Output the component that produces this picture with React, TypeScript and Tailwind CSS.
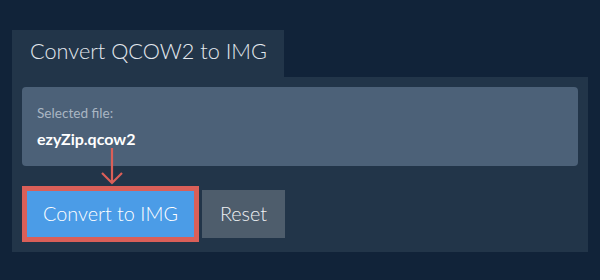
import React from 'react';

export default function App() {
  return (
    <div className="w-[600px] h-[280px] bg-[#112339] pt-[30px] px-[12px] font-['Lato','Open_Sans',sans-serif]">
      <div className="w-[272px] h-[47px] bg-[#223549] pl-[18px] pt-[7px] text-[21.7px] leading-[28px] font-light text-[#e3e8ee]">
        Convert QCOW2 to IMG
      </div>
      <div className="relative w-[576px] h-[175px] bg-[#223549] p-[10px]">
        <div className="h-[79px] rounded-[4px] bg-[#4c6178] px-[15px] pt-[17px]">
          <div className="text-[13.6px] leading-[18px] text-[#aab6c3]">Selected file:</div>
          <div className="mt-[7px] text-[16px] leading-[20px] font-bold text-white">ezyZip.qcow2</div>
        </div>
        <div className="mt-[20px] flex items-center">
          <div className="border-[5px] border-[#da5f58]">
            <button className="w-[167px] h-[46px] bg-[#4b9ce7] text-[19.8px] font-light text-white">Convert to IMG</button>
          </div>
          <button className="ml-[3px] w-[83px] h-[48px] bg-[#4e5d6c] text-[19.8px] font-light text-[#eef1f4]">Reset</button>
        </div>
        <svg className="absolute left-[88px] top-[71px]" width="24" height="37" viewBox="0 0 24 37" fill="none">
          <path d="M12 0V35M2 25l10 10 10-10" stroke="#da5f58" strokeWidth="2.2" />
        </svg>
      </div>
    </div>
  );
}
